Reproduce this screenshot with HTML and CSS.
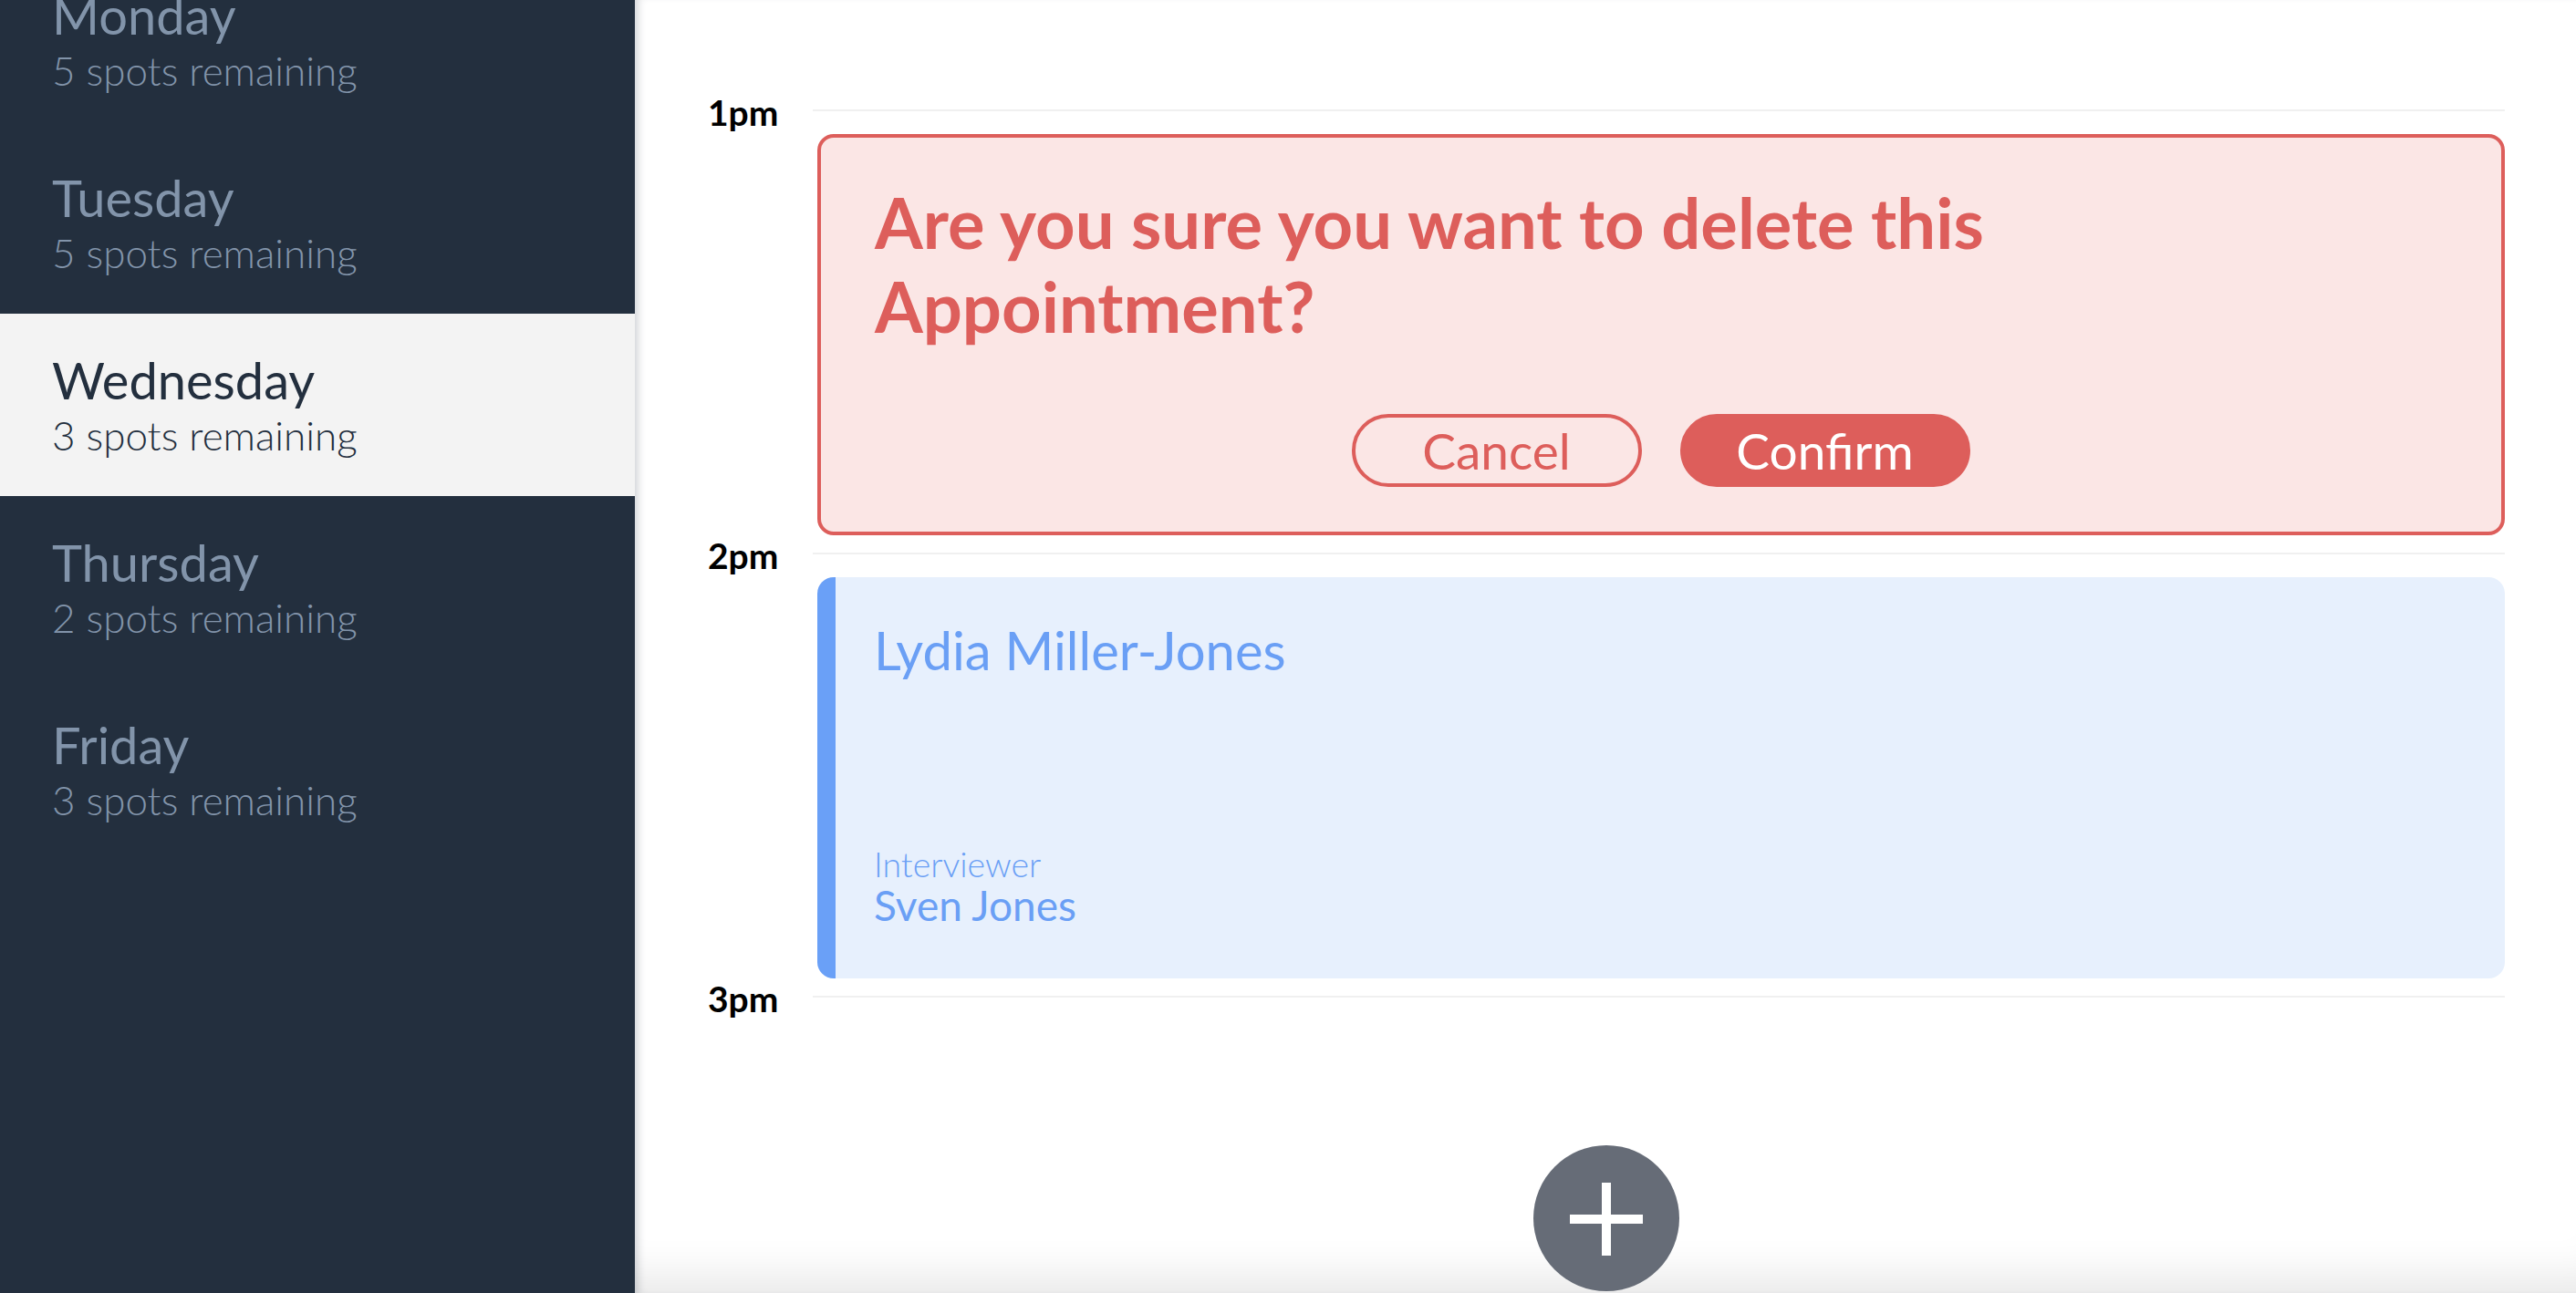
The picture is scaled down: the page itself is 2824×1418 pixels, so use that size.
FILE: index.html
```html
<!DOCTYPE html>
<html lang="en">
<head>
<meta charset="utf-8">
<title>Interview Scheduler</title>
<link rel="stylesheet" href="styles.css">
</head>
<body>
<div class="layout">
  <section class="sidebar">
    <nav class="sidebar__menu">
      <ul class="day-list">
        <li class="day-list__item">
          <h2 class="day-list__name">Monday</h2>
          <h3 class="day-list__spots">5 spots remaining</h3>
        </li>
        <li class="day-list__item">
          <h2 class="day-list__name">Tuesday</h2>
          <h3 class="day-list__spots">5 spots remaining</h3>
        </li>
        <li class="day-list__item day-list__item--selected">
          <h2 class="day-list__name">Wednesday</h2>
          <h3 class="day-list__spots">3 spots remaining</h3>
        </li>
        <li class="day-list__item">
          <h2 class="day-list__name">Thursday</h2>
          <h3 class="day-list__spots">2 spots remaining</h3>
        </li>
        <li class="day-list__item">
          <h2 class="day-list__name">Friday</h2>
          <h3 class="day-list__spots">3 spots remaining</h3>
        </li>
      </ul>
    </nav>
  </section>

  <main class="schedule">
    <article class="appointment">
      <header class="appointment__time">
        <h4 class="appointment__label">1pm</h4>
        <hr class="appointment__separator">
      </header>
      <div class="appointment__card appointment__card--confirm">
        <h1 class="confirm__message">Are you sure you want to delete this<br>Appointment?</h1>
        <div class="confirm__actions">
          <button class="button button--outline" type="button">Cancel</button>
          <button class="button button--filled" type="button">Confirm</button>
        </div>
      </div>
    </article>

    <article class="appointment">
      <header class="appointment__time">
        <h4 class="appointment__label">2pm</h4>
        <hr class="appointment__separator">
      </header>
      <div class="appointment__card appointment__card--show">
        <h2 class="show__student">Lydia Miller-Jones</h2>
        <section class="show__interviewer">
          <h4 class="show__interviewer-label">Interviewer</h4>
          <h3 class="show__interviewer-name">Sven Jones</h3>
        </section>
      </div>
    </article>

    <article class="appointment">
      <header class="appointment__time">
        <h4 class="appointment__label">3pm</h4>
        <hr class="appointment__separator">
      </header>
      <div class="appointment__add">
        <button class="add-button" type="button" aria-label="Add">
          <svg width="160" height="160" viewBox="0 0 160 160" aria-hidden="true">
            <circle cx="80" cy="80" r="80" fill="#666c77"/>
            <rect x="75" y="41" width="10" height="80" fill="#ffffff"/>
            <rect x="40" y="76" width="80" height="10" fill="#ffffff"/>
          </svg>
        </button>
      </div>
    </article>
  </main>
</div>
</body>
</html>
```

FILE: styles.css
```css
* {
  box-sizing: border-box;
}

html, body {
  margin: 0;
  padding: 0;
  height: 100%;
  overflow: hidden;
}

body {
  font-family: Lato, "Noto Sans", "Liberation Sans", sans-serif;
  background: #ffffff;
}

.layout {
  display: flex;
  height: 100vh;
}

/* ---------- Sidebar ---------- */
.sidebar {
  width: 696px;
  flex: 0 0 696px;
  background: #232f3e;
  overflow: hidden;
}

.day-list {
  list-style: none;
  margin: -56px 0 0 0;
  padding: 0;
}

.day-list__item {
  height: 200px;
  padding: 41px 0 0 57px;
  color: #8294aa;
}

.day-list__item--selected {
  background: #f3f3f3;
  color: #232f3e;
}

.day-list__name {
  margin: 0;
  font-size: 56px;
  line-height: 64px;
  font-weight: 400;
}

.day-list__spots {
  margin: 0;
  font-size: 44px;
  line-height: 57px;
  font-weight: 300;
}

/* ---------- Schedule ---------- */
.schedule {
  flex: 1;
  padding: 103px 78px 0 80px;
  box-shadow:
    inset 9px 0 10px -6px rgba(30, 40, 60, 0.22),
    inset 0 -60px 45px -40px rgba(0, 0, 0, 0.09);
  overflow: hidden;
}

.appointment__time {
  display: flex;
  align-items: flex-start;
  height: 40px;
}

.appointment__label {
  width: 115px;
  flex: 0 0 115px;
  margin: 0;
  font-size: 39px;
  line-height: 40px;
  font-weight: 700;
  color: #000000;
}

.appointment__separator {
  flex: 1;
  margin: 17px 0 0 0;
  border: 0;
  height: 2px;
  background: #f0f0f0;
}

.appointment__card {
  margin: 4px 0 2px 120px;
  height: 440px;
  border-radius: 18px;
}

/* confirm */
.appointment__card--confirm {
  background: #fbe6e5;
  border: 4px solid #dd5e5b;
  padding: 47px 60px 49px 59px;
  color: #dd5e5b;
}

.confirm__message {
  margin: 0;
  font-size: 76px;
  line-height: 92px;
  font-weight: 700;
}

.confirm__actions {
  margin-top: 72px;
  display: flex;
  justify-content: center;
  gap: 42px;
}

.button {
  width: 318px;
  height: 80px;
  border-radius: 40px;
  border: 4px solid #dd5e5b;
  font-family: Lato, "Noto Sans", "Liberation Sans", sans-serif;
  font-size: 55px;
  line-height: 1;
  font-weight: 400;
  padding: 0;
  display: flex;
  align-items: center;
  justify-content: center;
}

.button--outline {
  background: transparent;
  color: #dd5e5b;
}

.button--filled {
  background: #dd5e5b;
  color: #ffffff;
}

/* show */
.appointment__card--show {
  background: #e7f0fd;
  border-left: 20px solid #6aa0f7;
  padding: 48px 40px 57px 42px;
  display: flex;
  flex-direction: column;
  justify-content: space-between;
  color: #6a9ff5;
}

.show__student {
  margin: 0;
  font-size: 58px;
  line-height: 64px;
  font-weight: 400;
}

.show__interviewer-label {
  margin: 0;
  font-size: 37.5px;
  line-height: 44px;
  font-weight: 300;
}

.show__interviewer-name {
  margin: 0;
  font-size: 46px;
  line-height: 46px;
  font-weight: 400;
}

/* add */
.appointment__add {
  display: flex;
  justify-content: center;
  margin-top: 141px;
}

.add-button {
  width: 160px;
  height: 160px;
  padding: 0;
  border: 0;
  background: transparent;
  display: block;
}

.add-button svg {
  display: block;
}
```
